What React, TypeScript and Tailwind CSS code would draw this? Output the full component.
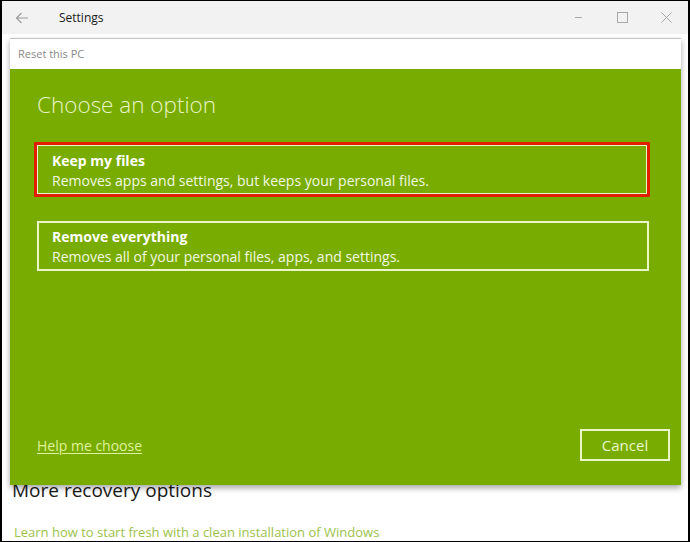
import React from "react";

const font = { fontFamily: '"Open Sans", "Noto Sans", sans-serif' };

export default function App() {
  return (
    <div
      className="relative w-[690px] h-[542px] overflow-hidden bg-white border-l-2 border-r-2 border-t border-b border-black box-border"
      style={font}
    >
      {/* Title bar */}
      <div className="flex items-center h-[33px] bg-[#f2f2f2] text-[#1a1a1a]">
        <div className="w-[40px] flex justify-center">
          <svg width="14" height="12" viewBox="0 0 14 12" fill="none" stroke="#9a9a9a" strokeWidth="1.1">
            <path d="M13 6H1.5M6.5 1L1.5 6l5 5" />
          </svg>
        </div>
        <div className="pl-[17px] text-[12px]">Settings</div>
        <div className="ml-auto flex items-center h-full">
          <div className="w-[44px] h-full flex items-center justify-center">
            <svg width="11" height="11" viewBox="0 0 11 11" stroke="#a8a8a8" strokeWidth="1">
              <path d="M2 5.5h7" />
            </svg>
          </div>
          <div className="w-[44px] h-full flex items-center justify-center">
            <svg width="11" height="11" viewBox="0 0 11 11" fill="none" stroke="#a8a8a8" strokeWidth="1">
              <rect x="0.5" y="0.5" width="10" height="10" />
            </svg>
          </div>
          <div className="w-[44px] h-full flex items-center justify-center">
            <svg width="11" height="11" viewBox="0 0 11 11" stroke="#a8a8a8" strokeWidth="1">
              <path d="M0.5 0.5l10 10M10.5 0.5l-10 10" />
            </svg>
          </div>
        </div>
      </div>

      {/* Page content behind dialog */}
      <div className="pl-[10px] pt-[443px]">
        <div className="text-[19px] text-[#1a1a1a] leading-[26px]">More recovery options</div>
        <div className="mt-[20px] pl-[2px] text-[13px] text-[#9cc24a] leading-[18px]">
          Learn how to start fresh with a clean installation of Windows
        </div>
      </div>

      {/* Dialog */}
      <div className="absolute left-[8px] top-[37px] w-[671px] h-[447px] flex flex-col border-t border-[#c4c4c4] shadow-[0_3px_6px_rgba(0,0,0,0.35)]">
        <div className="h-[30px] bg-white flex items-center pl-[8px] text-[11px] text-[#8a8a8a]">
          Reset this PC
        </div>
        <div className="flex-1 bg-[#79ac00] flex flex-col pl-[27px] pr-[32px]">
          <div className="pt-[20px] text-[22.5px] font-light text-[#e8f5c4] leading-[32px]">Choose an option</div>
          <div className="mt-[21px] -ml-[3px] -mr-[1px] border-[3px] border-[#e02000] rounded-[1px]">
            <div className="border border-[#eaf6c6] px-[14px] pt-[5px] pb-[2px]">
              <div className="text-[14px] font-bold text-white leading-[20px]">Keep my files</div>
              <div className="text-[14px] text-[#f1f8e2] leading-[20px]">
                Removes apps and settings, but keeps your personal files.
              </div>
            </div>
          </div>
          <div className="mt-[24px] border-2 border-[#eaf6c6] px-[13px] pt-[4px] pb-[2px]">
            <div className="text-[14px] font-bold text-white leading-[20px]">Remove everything</div>
            <div className="text-[14px] text-[#f1f8e2] leading-[20px]">
              Removes all of your personal files, apps, and settings.
            </div>
          </div>
          <div className="mt-auto mb-[24px] flex items-center justify-between">
            <a className="text-[14px] text-[#dff29a] underline underline-offset-2">Help me choose</a>
            <div className="w-[90px] h-[32px] border-2 border-[#eaf6c6] flex items-center justify-center text-[15px] text-[#eaf6c6] -mr-[21px]">
              Cancel
            </div>
          </div>
        </div>
      </div>
    </div>
  );
}
